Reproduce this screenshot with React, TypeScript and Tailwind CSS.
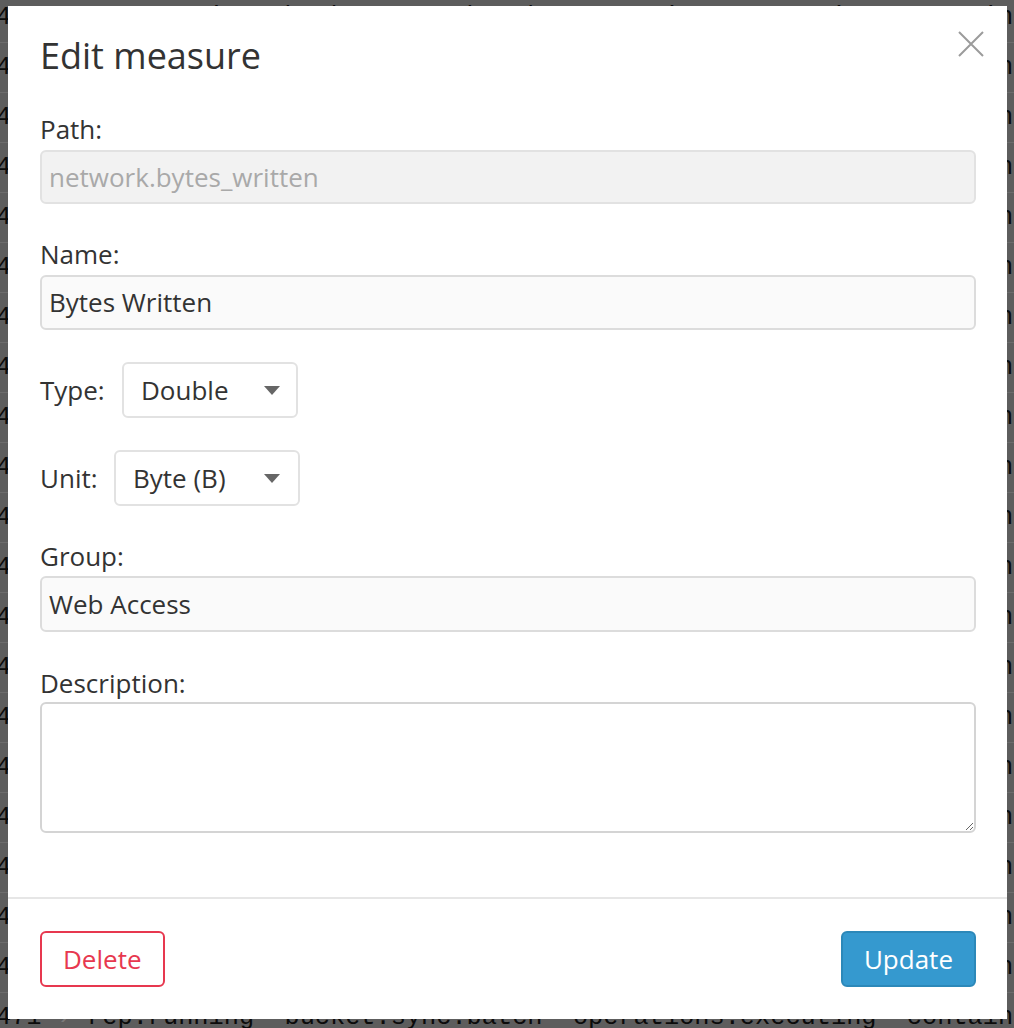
import React from "react";

const ROW_TEXT_A = "471 ";
const ROW_TEXT_B = " rep:running  bucket:sync:batch  operations:executing  containers";

function BgRow({ last }: { last?: boolean }) {
  return (
    <div
      className={
        "h-[50px] shrink-0 whitespace-pre leading-[49px] text-[25.3px] text-[#0b0b0b] pl-0 -ml-[4px] " +
        (last ? "" : "border-b border-[#6c6c6c]")
      }
      style={{ fontFamily: '"Liberation Mono", monospace' }}
    >
      {ROW_TEXT_A}
      <span className="text-[#7a7a7a]">›</span>
      {ROW_TEXT_B}
    </div>
  );
}

function Caret() {
  return (
    <svg width="16" height="9" viewBox="0 0 16 9" className="shrink-0">
      <path d="M0 0 L16 0 L8 9 Z" fill="#666666" />
    </svg>
  );
}

export default function App() {
  const rows = Array.from({ length: 21 });
  return (
    <div
      className="relative w-[1014px] h-[1028px] overflow-hidden bg-[#5d5d5d]"
      style={{ fontFamily: '"Open Sans", "Noto Sans", sans-serif' }}
    >
      <div className="flex flex-col -mt-[7px]">
        {rows.map((_, i) => (
          <BgRow key={i} />
        ))}
      </div>

      <div className="absolute left-[8px] top-[6px] w-[999px] h-[1013px] bg-white flex flex-col text-[#333333]">
        <button className="absolute right-[20px] top-[22px] w-[32px] h-[32px] flex items-center justify-center">
          <svg width="28" height="28" viewBox="0 0 28 28">
            <path d="M2 2 L26 26 M26 2 L2 26" stroke="#9b9b9b" strokeWidth="2" fill="none" />
          </svg>
        </button>

        <div className="flex flex-col pl-[32px] pr-[31px] h-[891px]">
          <h1 className="mt-[28px] text-[36px] leading-[43px] font-normal">Edit measure</h1>

          <label className="mt-[35px] text-[26px] leading-[34px] mb-[4px]">Path:</label>
          <div className="h-[54px] rounded-[6px] border-2 border-[#e2e2e2] bg-[#f2f2f2] flex items-center px-[7px] text-[26px] text-[#a9a9a9]">
            network.bytes_written
          </div>

          <label className="mt-[33px] text-[26px] leading-[34px] mb-[4px]">Name:</label>
          <div className="h-[55px] rounded-[6px] border-2 border-[#dcdcdc] bg-[#fafafa] flex items-center px-[7px] text-[26px]">
            Bytes Written
          </div>

          <div className="mt-[32px] flex items-center">
            <span className="text-[26px] leading-[34px] w-[82px]">Type:</span>
            <div className="h-[56px] w-[176px] rounded-[6px] border-2 border-[#e2e2e2] bg-white flex items-center justify-between pl-[17px] pr-[16px] text-[26px]">
              <span>Double</span>
              <Caret />
            </div>
          </div>

          <div className="mt-[32px] flex items-center">
            <span className="text-[26px] leading-[34px] w-[74px]">Unit:</span>
            <div className="h-[56px] w-[186px] rounded-[6px] border-2 border-[#e2e2e2] bg-white flex items-center justify-between pl-[17px] pr-[18px] text-[26px]">
              <span>Byte (B)</span>
              <Caret />
            </div>
          </div>

          <label className="mt-[33px] text-[26px] leading-[34px] mb-[3px]">Group:</label>
          <div className="h-[56px] rounded-[6px] border-2 border-[#dcdcdc] bg-[#fafafa] flex items-center px-[7px] text-[26px]">
            Web Access
          </div>

          <label className="mt-[34px] text-[26px] leading-[34px] mb-[2px]">Description:</label>
          <textarea
            className="h-[131px] rounded-[6px] border-2 border-[#d4d4d4] bg-white px-[7px] py-[6px] text-[26px] outline-none"
            defaultValue=""
          />
        </div>

        <div className="border-t-2 border-[#e6e6e6] flex items-center justify-between pl-[32px] pr-[31px] pt-[32px]">
          <button className="h-[56px] px-[21px] rounded-[6px] border-2 border-[#e7384f] text-[#e7384f] text-[26px] bg-white">
            Delete
          </button>
          <button className="h-[56px] px-[21px] rounded-[6px] border-2 border-[#2c88b9] bg-[#3599cf] text-white text-[26px] font-medium">
            Update
          </button>
        </div>
      </div>
    </div>
  );
}
